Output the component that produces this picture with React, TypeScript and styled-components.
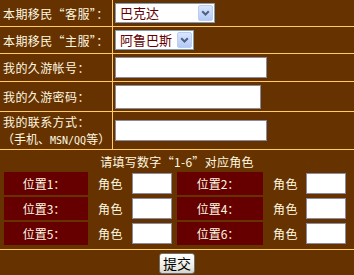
import React from 'react';
import styled, { createGlobalStyle } from 'styled-components';

const GlobalStyle = createGlobalStyle`
* { box-sizing: border-box; }
body {
    margin: 0;
    background: #663300;
    font-family: "Noto Sans CJK SC", "Liberation Sans", sans-serif;
    font-size: 12px;
}
`;

const LINE = '#ffcc66';
const TEXT = '#fff8e0';

const Page = styled.div`
width: 354px;
height: 275px;
background: #663300;
color: ${TEXT};
display: flex;
flex-direction: column;
`;

const FormRow = styled.div<{ $h: number }>`
display: flex;
height: ${p => p.$h}px;
border-bottom: 1px solid ${LINE};
`;

const LabelCell = styled.div`
width: 113px;
border-right: 1px solid ${LINE};
padding-left: 3px;
display: flex;
flex-direction: column;
justify-content: center;
line-height: 17px;
white-space: nowrap;
letter-spacing: 0.4px;
`;

const SubLine = styled.span`
letter-spacing: 0;
margin-left: -1px;
`;

const Latin = styled.span`
font-family: "DejaVu Sans Mono", "Liberation Mono", monospace;
font-size: 10px;
`;

const FieldCell = styled.div`
flex: 1;
padding-left: 2px;
display: flex;
align-items: center;
`;

const TextInput = styled.input<{ $w: number; $h: number }>`
width: ${p => p.$w}px;
height: ${p => p.$h}px;
border: 1px solid #8a8aa2;
background: #ffffff;
padding: 0;
margin: 0;
outline: none;
`;

const SelectBox = styled.div<{ $w: number }>`
width: ${p => p.$w}px;
height: 20px;
border: 1px solid #7f9db9;
background: #ffffff;
display: flex;
align-items: center;
justify-content: space-between;
padding: 1px 1px 1px 4px;
color: #660000;
font-size: 13px;
`;

const SelectText = styled.span`
line-height: 16px;
`;

const ArrowBtn = styled.div`
width: 15px;
height: 16px;
border: 1px solid #b9cdf5;
border-radius: 2px;
background: linear-gradient(#dbe6fd, #b4c9f4);
display: flex;
align-items: center;
justify-content: center;
`;

const Hint = styled.div`
height: 22px;
display: flex;
align-items: center;
justify-content: center;
letter-spacing: 0.3px;
`;

const Grid = styled.div`
display: flex;
flex-direction: column;
gap: 2px;
padding: 0 0 4px 4px;
border-bottom: 1px solid ${LINE};
`;

const GridRow = styled.div`
display: flex;
height: 23px;
align-items: center;
`;

const PosCell = styled.div<{ $w: number }>`
width: ${p => p.$w}px;
height: 23px;
background: #660000;
display: flex;
align-items: center;
justify-content: center;
padding-right: 4px;
`;

const RoleCell = styled.div<{ $w: number }>`
width: ${p => p.$w}px;
padding-left: 10px;
letter-spacing: 0.5px;
`;

const RoleInput = styled.input`
width: 40px;
height: 21px;
border: 1px solid #8a8aa2;
background: #ffffff;
padding: 0;
margin: 0 5px 0 0;
outline: none;
`;

const Footer = styled.div`
display: flex;
justify-content: center;
padding-top: 3px;
`;

const SubmitBtn = styled.button`
width: 36px;
height: 21px;
border: 1px solid #6f6f6f;
border-radius: 3px;
background: linear-gradient(#ffffff, #ecebe4 70%, #d6d3c8);
color: #000000;
font-family: "Noto Sans CJK SC", sans-serif;
font-size: 14px;
line-height: 17px;
padding: 0;
`;

function Chevron() {
    return (
        <svg width="9" height="6" viewBox="0 0 9 6">
            <path d="M1.2 1.2 L4.5 4.5 L7.8 1.2" fill="none" stroke="#4d6185" strokeWidth="2" />
        </svg>
    );
}

const positions = [
    ['位置1：', '位置2：'],
    ['位置3：', '位置4：'],
    ['位置5：', '位置6：'],
];

export default function App() {
    return (
        <Page>
            <GlobalStyle />
            <FormRow $h={27}>
                <LabelCell>本期移民“客服”：</LabelCell>
                <FieldCell>
                    <SelectBox $w={100}>
                        <SelectText>巴克达</SelectText>
                        <ArrowBtn><Chevron /></ArrowBtn>
                    </SelectBox>
                </FieldCell>
            </FormRow>
            <FormRow $h={27}>
                <LabelCell>本期移民“主服”：</LabelCell>
                <FieldCell>
                    <SelectBox $w={79}>
                        <SelectText>阿鲁巴斯</SelectText>
                        <ArrowBtn><Chevron /></ArrowBtn>
                    </SelectBox>
                </FieldCell>
            </FormRow>
            <FormRow $h={28}>
                <LabelCell>我的久游帐号：</LabelCell>
                <FieldCell><TextInput $w={152} $h={21} /></FieldCell>
            </FormRow>
            <FormRow $h={30}>
                <LabelCell>我的久游密码：</LabelCell>
                <FieldCell><TextInput type="password" $w={146} $h={24} /></FieldCell>
            </FormRow>
            <FormRow $h={38}>
                <LabelCell>
                    <span>我的联系方式：</span>
                    <SubLine>（手机、<Latin>MSN/QQ</Latin>等）</SubLine>
                </LabelCell>
                <FieldCell><TextInput $w={152} $h={21} /></FieldCell>
            </FormRow>
            <Hint>请填写数字“1-6”对应角色</Hint>
            <Grid>
                {positions.map((row, i) => (
                    <GridRow key={i}>
                        <PosCell $w={84}>{row[0]}</PosCell>
                        <RoleCell $w={44}>角色</RoleCell>
                        <RoleInput />
                        <PosCell $w={86}>{row[1]}</PosCell>
                        <RoleCell $w={43}>角色</RoleCell>
                        <RoleInput />
                    </GridRow>
                ))}
            </Grid>
            <Footer>
                <SubmitBtn>提交</SubmitBtn>
            </Footer>
        </Page>
    );
}
